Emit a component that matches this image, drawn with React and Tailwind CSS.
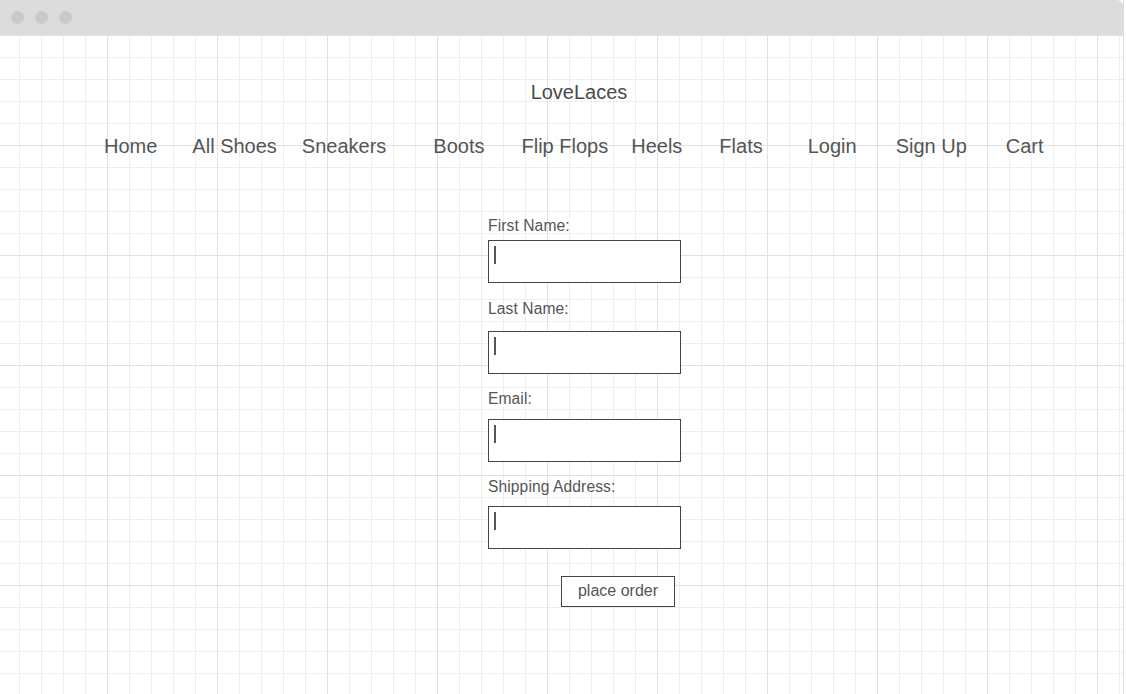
import React from 'react';

// nav links with the gap before each one (wireframe spacing is uneven)
const navLinks = [
    { label: 'Home', gap: '' },
    { label: 'All Shoes', gap: 'ml-[35px]' },
    { label: 'Sneakers', gap: 'ml-[25px]' },
    { label: 'Boots', gap: 'ml-[47px]' },
    { label: 'Flip Flops', gap: 'ml-[37px]' },
    { label: 'Heels', gap: 'ml-[23px]' },
    { label: 'Flats', gap: 'ml-[37px]' },
    { label: 'Login', gap: 'ml-[45px]' },
    { label: 'Sign Up', gap: 'ml-[39px]' },
    { label: 'Cart', gap: 'ml-[39px]' },
];

const fields = [
    { label: 'First Name:', labelTop: 'mt-0', inputTop: 'mt-[5px]' },
    { label: 'Last Name:', labelTop: 'mt-[17px]', inputTop: 'mt-[13px]' },
    { label: 'Email:', labelTop: 'mt-[16px]', inputTop: 'mt-[11px]' },
    { label: 'Shipping Address:', labelTop: 'mt-[16px]', inputTop: 'mt-[10px]' },
];

const TopBar = () => (
    <div className="h-[35px] bg-[#dcdcdc] flex items-center gap-[11px] pl-[11px] rounded-tr-[6px]">
        <span className="w-[13px] h-[13px] rounded-full bg-[#c9c9c9]"></span>
        <span className="w-[13px] h-[13px] rounded-full bg-[#c9c9c9]"></span>
        <span className="w-[13px] h-[13px] rounded-full bg-[#c9c9c9]"></span>
    </div>
);

const Field = ({ label, labelTop, inputTop }) => (
    <div className="flex flex-col">
        <label className={`${labelTop} text-[15.6px] leading-[18px] tracking-[0.1px] text-[#555]`}>{label}</label>
        {/* caja de texto con cursor dibujado */}
        <div className={`${inputTop} w-[193px] h-[43px] border border-[#454545] bg-white pl-[5px] pt-[5px]`}>
            <div className="w-[2px] h-[18px] bg-[#555]"></div>
        </div>
    </div>
);

export default function App() {
    return (
        <div className="w-[1126px] h-[694px] bg-white overflow-hidden font-['Liberation_Sans',Arial,sans-serif]">
            <div className="w-[1124px] h-full border-r border-[#dedede] flex flex-col">
                <TopBar />
                <div className="flex-1 bg-white bg-[linear-gradient(to_right,#e1e1e1_1px,transparent_1px),linear-gradient(to_bottom,#e1e1e1_1px,transparent_1px),linear-gradient(to_right,#eeeeee_1px,transparent_1px),linear-gradient(to_bottom,#eeeeee_1px,transparent_1px)] bg-size-[110px_110px,110px_110px,22px_22px,22px_22px] bg-position-[107px_0,107px_0,19px_0,19px_0]">
                    {/* titulo */}
                    <div className="pt-[45px] text-center">
                        <h1 className="text-[20px] leading-[24px] text-[#4a4a4a] pl-[35px]">LoveLaces</h1>
                    </div>

                    {/* navegacion */}
                    <nav className="mt-[30px] flex pl-[104px]">
                        {navLinks.map((link) => (
                            <a key={link.label} className={`${link.gap} text-[20px] leading-[24px] text-[#555] whitespace-nowrap`}>
                                {link.label}
                            </a>
                        ))}
                    </nav>

                    {/* formulario */}
                    <form className="mt-[59px] ml-[488px] w-[193px] flex flex-col">
                        {fields.map((f) => (
                            <Field key={f.label} {...f} />
                        ))}
                        <button
                            type="button"
                            className="mt-[27px] ml-[73px] w-[114px] h-[31px] border border-[#454545] bg-white text-[16px] leading-[18px] text-[#555] flex items-center justify-center pb-px"
                        >
                            place order
                        </button>
                    </form>
                </div>
            </div>
        </div>
    );
}
